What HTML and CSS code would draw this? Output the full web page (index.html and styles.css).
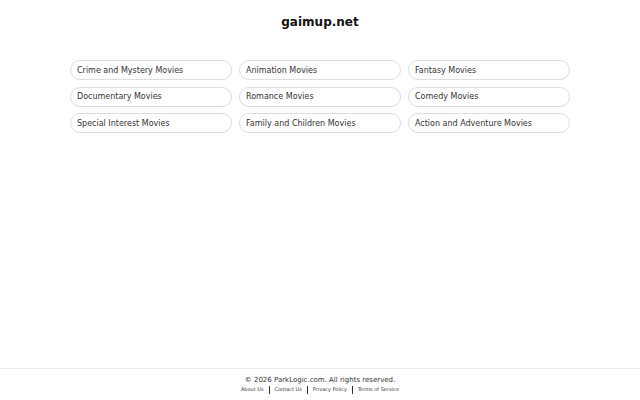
FILE: index.html
```html
<!DOCTYPE html>
<html>
<head>
<meta charset="utf-8">
<link rel="stylesheet" href="styles.css">
</head>
<body>
<div class="page">
  <header class="header"><h1 class="title">gaimup.net</h1></header>
  <main class="main">
    <div class="grid">
      <a class="pill" href="#">Crime and Mystery Movies</a>
      <a class="pill" href="#">Animation Movies</a>
      <a class="pill" href="#">Fantasy Movies</a>
      <a class="pill" href="#">Documentary Movies</a>
      <a class="pill" href="#">Romance Movies</a>
      <a class="pill" href="#">Comedy Movies</a>
      <a class="pill" href="#">Special Interest Movies</a>
      <a class="pill" href="#">Family and Children Movies</a>
      <a class="pill" href="#">Action and Adventure Movies</a>
    </div>
  </main>
  <footer class="footer">
    <div class="copy">© 2026 ParkLogic.com. All rights reserved.</div>
    <div class="links">
      <a href="#">About Us</a><span class="sep"></span>
      <a href="#">Contact Us</a><span class="sep"></span>
      <a href="#">Privacy Policy</a><span class="sep"></span>
      <a href="#">Terms of Service</a>
    </div>
  </footer>
</div>
</body>
</html>
```
FILE: styles.css
```css
html, body {
  margin: 0;
  padding: 0;
  height: 100%;
  background: #fff;
  font-family: "DejaVu Sans", sans-serif;
  color: #222;
}
.page {
  display: flex;
  flex-direction: column;
  min-height: 100vh;
}
.header {
  display: flex;
  justify-content: center;
  padding-top: 14px;
}
.title {
  margin: 0;
  font-size: 12px;
  line-height: 17px;
  font-weight: bold;
  color: #111;
}
.main {
  flex: 1;
  display: flex;
  justify-content: center;
  padding-top: 29px;
}
.grid {
  width: 500px;
  display: grid;
  grid-template-columns: repeat(3, 1fr);
  column-gap: 7px;
  row-gap: 6.5px;
  align-content: start;
}
.pill {
  display: flex;
  align-items: center;
  height: 20px;
  box-sizing: border-box;
  border: 1px solid #ddd;
  border-radius: 10px;
  padding: 0 6px;
  font-size: 8px;
  color: #333;
  text-decoration: none;
}
.footer {
  border-top: 1px solid #eee;
  padding: 6px 0 6px;
  display: flex;
  flex-direction: column;
  align-items: center;
}
.copy {
  font-size: 7px;
  line-height: 10px;
  color: #333;
}
.links {
  display: flex;
  align-items: center;
  gap: 5px;
  font-size: 5px;
  line-height: 9px;
}
.links a {
  color: #333;
  text-decoration: none;
}
.sep {
  width: 1px;
  height: 8px;
  background: #333;
}
```
